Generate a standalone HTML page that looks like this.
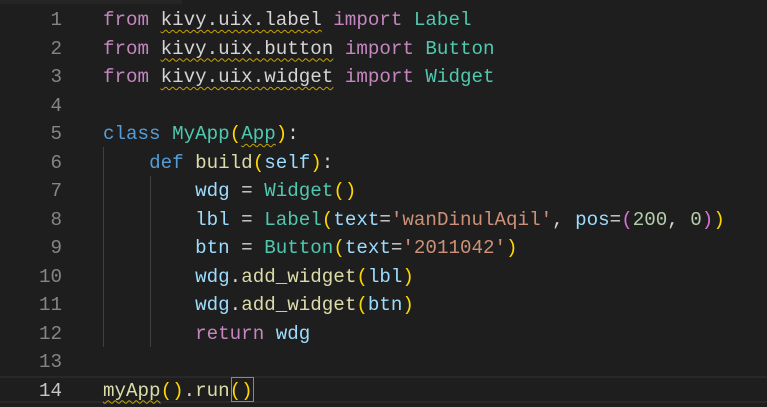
<!DOCTYPE html>
<html><head><meta charset="utf-8"><style>
html,body{margin:0;padding:0;background:#1e1e1e;width:767px;height:407px;overflow:hidden}
.top{position:absolute;left:0;top:0;width:182px;height:4px;background:#252526}
.wrap{position:absolute;left:0;top:3px;width:767px;height:404px}
.ln{position:absolute;left:0;width:62px;text-align:right;color:#858585;font:19.2px "Liberation Mono",monospace;}
.l{position:absolute;left:103px;white-space:pre;color:#d4d4d4;font:19.2px "Liberation Mono",monospace;}
.k{color:#C586C0}.b{color:#569CD6}.t{color:#4EC9B0}.f{color:#DCDCAA}.v{color:#9CDCFE}.s{color:#CE9178}.n{color:#B5CEA8}.p{color:#FFD700}.q{color:#DA70D6}
.w{text-decoration:underline wavy #c9a400;text-decoration-thickness:1px;text-underline-offset:4px}
.g{position:absolute;width:1px;background:#404040}
.cur{position:absolute;left:0;top:376px;width:767px;height:27px;border-top:2px solid #282828;border-bottom:2px solid #282828;box-sizing:border-box}
.box{position:absolute;left:231px;top:377px;width:23px;height:25px;border:1px solid #888;box-sizing:border-box}
</style></head><body>
<div class="top"></div>
<div class="cur"></div>
<div class="box"></div>
<div class="g" style="left:103px;top:147px;height:200px"></div>
<div class="g" style="left:150px;top:176px;height:171px"></div>
<div class="wrap">
<div class="ln" style="top:6px">1</div>
<div class="ln" style="top:34.5px">2</div>
<div class="ln" style="top:63px">3</div>
<div class="ln" style="top:91.5px">4</div>
<div class="ln" style="top:120px">5</div>
<div class="ln" style="top:148.5px">6</div>
<div class="ln" style="top:177px">7</div>
<div class="ln" style="top:205.5px">8</div>
<div class="ln" style="top:234px">9</div>
<div class="ln" style="top:262.5px">10</div>
<div class="ln" style="top:291px">11</div>
<div class="ln" style="top:319.5px">12</div>
<div class="ln" style="top:348px">13</div>
<div class="ln" style="top:376.5px;color:#c6c6c6">14</div>
<div class="l" style="top:6px"><span class="k">from</span> <span class="w">kivy.uix.label</span> <span class="k">import</span> <span class="t">Label</span></div>
<div class="l" style="top:34.5px"><span class="k">from</span> <span class="w">kivy.uix.button</span> <span class="k">import</span> <span class="t">Button</span></div>
<div class="l" style="top:63px"><span class="k">from</span> <span class="w">kivy.uix.widget</span> <span class="k">import</span> <span class="t">Widget</span></div>
<div class="l" style="top:120px"><span class="b">class</span> <span class="t">MyApp</span><span class="p">(</span><span class="t w">App</span><span class="p">)</span>:</div>
<div class="l" style="top:148.5px">    <span class="b">def</span> <span class="f">build</span><span class="p">(</span><span class="v">self</span><span class="p">)</span>:</div>
<div class="l" style="top:177px">        <span class="v">wdg</span> = <span class="t">Widget</span><span class="p">()</span></div>
<div class="l" style="top:205.5px">        <span class="v">lbl</span> = <span class="t">Label</span><span class="p">(</span><span class="v">text</span>=<span class="s">'wanDinulAqil'</span>, <span class="v">pos</span>=<span class="q">(</span><span class="n">200</span>, <span class="n">0</span><span class="q">)</span><span class="p">)</span></div>
<div class="l" style="top:234px">        <span class="v">btn</span> = <span class="t">Button</span><span class="p">(</span><span class="v">text</span>=<span class="s">'2011042'</span><span class="p">)</span></div>
<div class="l" style="top:262.5px">        <span class="v">wdg</span>.<span class="f">add_widget</span><span class="p">(</span><span class="v">lbl</span><span class="p">)</span></div>
<div class="l" style="top:291px">        <span class="v">wdg</span>.<span class="f">add_widget</span><span class="p">(</span><span class="v">btn</span><span class="p">)</span></div>
<div class="l" style="top:319.5px">        <span class="k">return</span> <span class="v">wdg</span></div>
<div class="l" style="top:376.5px"><span class="f w">myApp</span><span class="p">()</span>.<span class="f">run</span><span class="p">()</span></div>
</div>
</body></html>
